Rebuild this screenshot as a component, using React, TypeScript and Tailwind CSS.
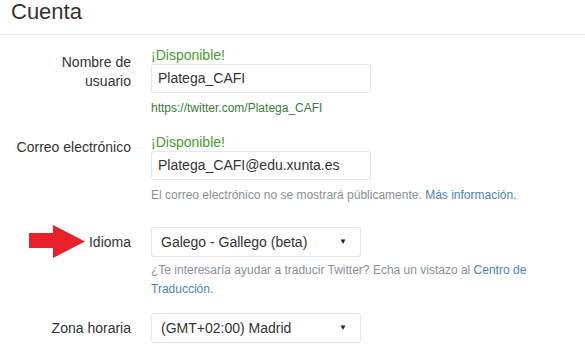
import React from "react";

const font = { fontFamily: '"Liberation Sans", Arial, sans-serif' };

function Arrow() {
  return (
    <svg
      className="absolute left-[29px] top-[225px]"
      width="57"
      height="34"
      viewBox="0 0 57 34"
    >
      <path d="M0 8 H24 V0 L56 16.5 L24 33 V23 H0 Z" fill="#e8202a" />
    </svg>
  );
}

function FakeSelect({ value }: { value: string }) {
  return (
    <div className="flex h-[30px] w-[210px] items-center justify-between rounded-[3px] border border-[#e1e8ed] bg-white pl-[9px] pr-[13px] text-[14px] text-[#333]">
      <span>{value}</span>
      <span className="text-[8px] leading-none text-[#222]">▼</span>
    </div>
  );
}

function TextInput({ value }: { value: string }) {
  return (
    <div className="flex h-[29px] w-[220px] items-center rounded-[3px] border border-[#e1e8ed] bg-white px-[6px] text-[14px] text-[#333]">
      {value}
    </div>
  );
}

export default function App() {
  return (
    <div
      className="relative h-[364px] w-[585px] overflow-hidden bg-white text-[#333]"
      style={font}
    >
      {/* Header */}
      <div className="h-[35px] border-b border-[#e6ecf0] px-[11px]">
        <h1 className="text-[22px] leading-[24px] text-[#333]">Cuenta</h1>
      </div>

      {/* Nombre de usuario */}
      <div className="mt-[12px] flex gap-[20px]">
        <div className="w-[131px] pt-[6px] text-right text-[14px] leading-[19px]">
          Nombre de
          <br />
          usuario
        </div>
        <div className="flex flex-col">
          <div className="text-[14px] leading-[17px] text-[#4a9a2e]">¡Disponible!</div>
          <TextInput value="Platega_CAFI" />
          <div className="mt-[7px] text-[12px] leading-[16px] text-[#3c7a3d]">
            https://twitter.com/Platega_CAFI
          </div>
        </div>
      </div>

      {/* Correo */}
      <div className="mt-[18px] flex gap-[20px]">
        <div className="w-[131px] pt-[4px] text-right text-[14px] leading-[19px]">
          Correo electrónico
        </div>
        <div className="flex flex-col">
          <div className="text-[14px] leading-[17px] text-[#4a9a2e]">¡Disponible!</div>
          <TextInput value="Platega_CAFI@edu.xunta.es" />
          <div className="mt-[7px] text-[12px] leading-[16px] text-[#8a8f94]">
            El correo electrónico no se mostrará públicamente.{" "}
            <span className="text-[#4a82b8]">Más información.</span>
          </div>
        </div>
      </div>

      {/* Idioma */}
      <div className="mt-[24px] flex gap-[20px]">
        <div className="flex h-[30px] w-[131px] items-center justify-end text-[14px]">
          Idioma
        </div>
        <div className="flex w-[390px] flex-col">
          <FakeSelect value="Galego - Gallego (beta)" />
          <div className="mt-[4px] text-[12px] leading-[19px] text-[#8a8f94]">
            ¿Te interesaría ayudar a traducir Twitter? Echa un vistazo al{" "}
            <span className="text-[#4a82b8]">Centro de</span>
            <br />
            <span className="text-[#4a82b8]">Traducción.</span>
          </div>
        </div>
      </div>

      {/* Zona horaria */}
      <div className="mt-[14px] flex gap-[20px]">
        <div className="flex h-[30px] w-[131px] items-center justify-end text-[14px]">
          Zona horaria
        </div>
        <FakeSelect value="(GMT+02:00) Madrid" />
      </div>

      <Arrow />
    </div>
  );
}
